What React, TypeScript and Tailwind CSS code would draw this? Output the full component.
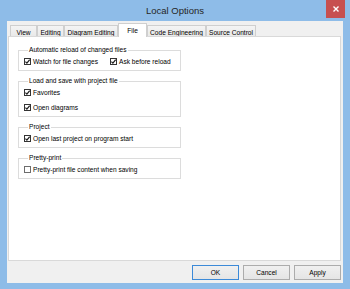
import React from "react";

const tabs = [
  { label: "View", w: "w-[27px]" },
  { label: "Editing", w: "w-[27px]" },
  { label: "Diagram Editing", w: "w-[54px]" },
  { label: "File", w: "w-[29px]", active: true },
  { label: "Code Engineering", w: "w-[59px]" },
  { label: "Source Control", w: "w-[50px]" },
];

const CheckBox = ({ checked }: { checked?: boolean }) => (
  <span
    className={
      "w-[7px] h-[7px] border bg-white flex items-center justify-center shrink-0 " +
      (checked ? "border-[#333333]" : "border-[#6d6d6d]")
    }
  >
    {checked && (
      <svg viewBox="0 0 5 5" className="w-[5px] h-[5px]">
        <path d="M0.4 2.6 L1.9 4.1 L4.7 0.7" stroke="#1a1a1a" strokeWidth="1.2" fill="none" />
      </svg>
    )}
  </span>
);

const Option = ({ label, checked, className }: { label: string; checked?: boolean; className?: string }) => (
  <div className={"flex items-center gap-[2px] h-[9px] " + (className ?? "")}>
    <CheckBox checked={checked} />
    <span className="leading-[9px] whitespace-nowrap">{label}</span>
  </div>
);

const Group = ({ title, children }: { title: string; children: React.ReactNode }) => (
  <fieldset className="border border-[#dcdcdc] w-[163px] pl-[5px] pt-[3px] pb-[4px]">
    <legend className="ml-[4px] px-[1px] leading-[8px] whitespace-nowrap">{title}</legend>
    {children}
  </fieldset>
);

export default function App() {
  return (
    <div className="w-[350px] h-[289px] bg-[#8ebce8] flex flex-col overflow-hidden text-black font-['Liberation_Sans',Arial,sans-serif] text-[6.6px]">
      {/* title bar */}
      <div className="h-[21px] flex items-start shrink-0">
        <div className="w-[24px]" />
        <div className="flex-1 text-center text-[9.5px] leading-[21px] text-[#262626]">Local Options</div>
        <div className="w-[19px] h-[18px] mr-[5px] bg-[#c75050] flex items-center justify-center">
          <svg viewBox="0 0 6 6" className="w-[6px] h-[6px]">
            <path d="M0.5 0.5 L5.5 5.5 M5.5 0.5 L0.5 5.5" stroke="#fff" strokeWidth="1.4" />
          </svg>
        </div>
      </div>

      {/* client area */}
      <div className="flex-1 mx-[7px] mb-[6px] bg-[#f0f0f0] flex flex-col pl-[1px] pr-[2px]">
        <div className="h-[16px] pt-[2px] pl-[2px] flex items-end shrink-0">
          {tabs.map((t) =>
            t.active ? (
              <div
                key={t.label}
                className={
                  t.w +
                  " h-[14px] relative z-10 bg-white border border-b-0 border-[#cfcfcf] text-center leading-[12px] pt-[1px] whitespace-nowrap"
                }
              >
                {t.label}
              </div>
            ) : (
              <div
                key={t.label}
                className={
                  t.w +
                  " h-[12px] bg-gradient-to-b from-[#f4f4f4] to-[#e8e8e8] border border-b-0 border-[#cfcfcf] text-center leading-[13px] whitespace-nowrap overflow-hidden"
                }
              >
                {t.label}
              </div>
            )
          )}
        </div>

        <div className="-mt-[1px] h-[225px] border border-[#d9d9d9] bg-white pt-[9px] pl-[9px] flex flex-col gap-[6px]">
          <Group title="Automatic reload of changed files">
            <div className="flex">
              <Option label="Watch for file changes" checked className="w-[86px]" />
              <Option label="Ask before reload" checked />
            </div>
          </Group>
          <Group title="Load and save with project file">
            <div className="flex flex-col gap-[6px]">
              <Option label="Favorites" checked />
              <Option label="Open diagrams" checked />
            </div>
          </Group>
          <Group title="Project">
            <Option label="Open last project on program start" checked />
          </Group>
          <Group title="Pretty-print">
            <Option label="Pretty-print file content when saving" />
          </Group>
        </div>

        <div className="mt-[4px] flex justify-end gap-[4px]">
          <button className="w-[47px] h-[15px] border border-[#3c8ad8] bg-gradient-to-b from-[#f0f0f0] to-[#e5e5e5] leading-[13px]">
            OK
          </button>
          <button className="w-[47px] h-[15px] border border-[#acacac] bg-gradient-to-b from-[#f0f0f0] to-[#e5e5e5] leading-[13px]">
            Cancel
          </button>
          <button className="w-[47px] h-[15px] border border-[#acacac] bg-gradient-to-b from-[#f0f0f0] to-[#e5e5e5] leading-[13px]">
            Apply
          </button>
        </div>
      </div>
    </div>
  );
}
